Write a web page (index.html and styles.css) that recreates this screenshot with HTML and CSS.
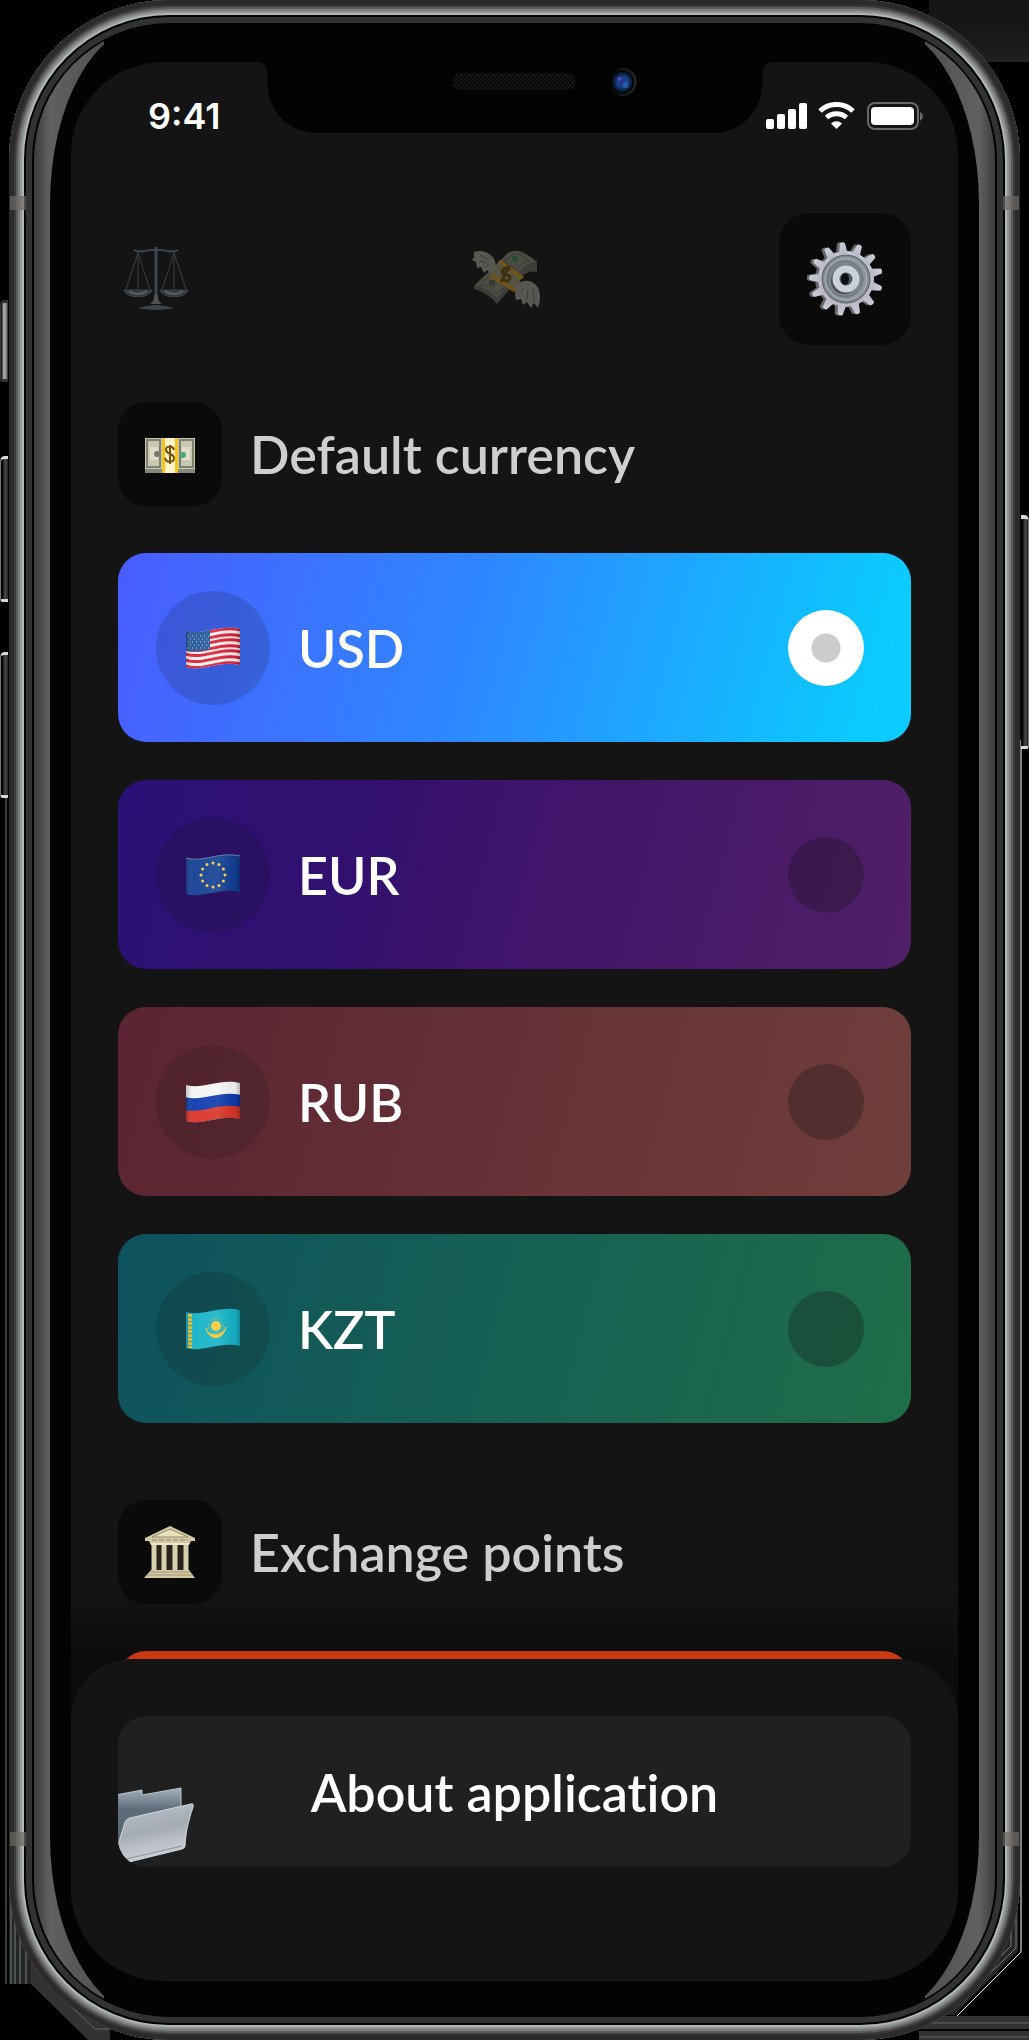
FILE: index.html
```html
<!DOCTYPE html>
<html lang="en">
<head>
<meta charset="utf-8">
<meta name="viewport" content="width=device-width, initial-scale=1">
<title>Settings</title>
<link rel="stylesheet" href="styles.css">
</head>
<body>
<div class="stage">
  <!-- corner fragments behind the device -->
  <div class="corner corner-top"></div>
  <svg class="corner corner-left" viewBox="0 0 110 1250" aria-hidden="true">
    <path d="M6 0V1194" stroke="#777" fill="none"/>
    <path d="M9 1085H31V1194H9z" fill="#252525"/>
    <path d="M11 1100v94M15 1120v74M20 1140v54M26 1160v34" stroke="#71807a" fill="none"/>
    <path d="M31 1140V1194L88 1250H110V1180z" fill="#333132"/>
    <path d="M56 1202L95 1239H110" stroke="#666" fill="none"/>
  </svg>
  <svg class="corner corner-right" viewBox="0 0 110 1300" aria-hidden="true">
    <path d="M102 0V1212L38 1276" stroke="#fff" fill="none"/>
    <path d="M99 1150V1211L35 1275H20L80 1190z" fill="#262626"/>
    <path d="M97 1150V1208L60 1244M92 1180V1206L70 1228" stroke="#737a78" fill="none"/>
    <path d="M0 1276H110V1300H0z" fill="#333132"/>
    <path d="M0 1283H110M0 1297H110" stroke="#666" fill="none"/>
    <path d="M0 1290H110" stroke="#000" stroke-width="2" fill="none"/>
  </svg>
  <span class="side-key key-mute"></span>
  <span class="side-key key-up"></span>
  <span class="side-key key-down"></span>
  <span class="side-key key-power"></span>

  <div class="phone">
    <span class="band band-tl"></span><span class="band band-tr"></span>
    <span class="band band-bl"></span><span class="band band-br"></span>
    <div class="face">
      <div class="bezel">
        <div class="screen">
          <svg class="notch" viewBox="0 0 519 71" aria-hidden="true">
            <defs>
              <pattern id="mesh" width="4" height="4" patternUnits="userSpaceOnUse"><path d="M0 0h2v2H0zM2 2h2v2H2z" fill="#1a1a1a"/></pattern>
              <radialGradient id="lens"><stop offset="0" stop-color="#2a2a8c"/><stop offset=".5" stop-color="#164385"/><stop offset="1" stop-color="#06142e"/></radialGradient>
              <linearGradient id="rim"><stop offset="0" stop-color="#030303"/><stop offset="1" stop-color="#2a2a2a"/></linearGradient>
            </defs>
            <path d="M0 0C8 0 12 4 12 12V20C12 50 34 71 62 71H457C485 71 507 50 507 20V12C507 4 511 0 519 0z" fill="#020202"/>
            <rect x="197" y="11" width="123" height="17" rx="8" fill="url(#mesh)"/>
            <circle cx="367" cy="20" r="13" fill="#080808" stroke="url(#rim)" stroke-width="2"/>
            <circle cx="367" cy="20" r="10" fill="url(#lens)"/>
            <circle cx="364" cy="17" r="2" fill="#5a48b5"/><circle cx="370" cy="23" r="3" fill="#225fa0"/>
          </svg>

          <header class="status">
            <span class="time">9:41</span>
            <svg class="signals" viewBox="0 0 158 28" aria-hidden="true">
              <g fill="#fff"><rect x="0" y="17" width="8" height="10" rx="2"/><rect x="11" y="12" width="8" height="15" rx="2"/><rect x="22" y="7" width="8" height="20" rx="2"/><rect x="33" y="1" width="8" height="26" rx="2"/>
              <path d="M70.500 27l-5.500-5.500a8 8 0 0 1 11 0z"/></g>
              <g fill="none" stroke="#fff" stroke-width="5"><path d="M54 9a24 24 0 0 1 33 0"/><path d="M60.500 15.500a15 15 0 0 1 20 0"/></g>
              <rect x="102" y="1" width="50" height="26" rx="7" fill="none" stroke="#69696b" stroke-width="2"/>
              <rect x="105" y="5" width="43" height="18" rx="4" fill="#fff"/>
              <path d="M154 10a5 5 0 0 1 0 9z" fill="#69696b"/>
            </svg>
          </header>

          <nav class="tabs" aria-label="Sections">
            <button class="tab" type="button" aria-label="Rates">
              <svg class="tab-icon" viewBox="0 0 76 76" aria-hidden="true">
                <g opacity=".75" fill="none" stroke="#4a5866">
                  <path d="M16 9c7 4 10-1 22 0c12-1 15 4 22 0" stroke-width="2"/>
                  <path d="M20 12L8 48M20 12L32 48M56 12L44 48M56 12L68 48M20 11V48M56 11V48" stroke="#4c4c4c"/>
                  <path d="M38 6V62" stroke-width="3"/>
                  <path d="M6 49h28c-2 9-26 9-28 0zM42 49h28c-2 9-26 9-28 0z" fill="#3b4652" stroke-width="1"/>
                  <path d="M11 50c5 4 13 4 18 0M47 50c5 4 13 4 18 0" stroke="#767472" stroke-width="2"/>
                  <path d="M36 54c0 5-1 7-4 9h12c-3-2-4-4-4-9z" fill="#66686b" stroke="none"/>
                  <path d="M22 67q16-5 32 0q-16 3-32 0z" fill="#4d555d" stroke-width="1"/>
                </g>
              </svg>
            </button>
            <button class="tab" type="button" aria-label="Exchange">
              <svg class="tab-icon" viewBox="0 0 76 76" aria-hidden="true">
                <path d="M3 46L38 12Q48 5 66 21V31Q55 28 43 43L26 63Q16 51 3 48z" fill="#3c3d38"/>
                <path d="M3 45L37 12Q47 6 66 21Q55 20 43 37L26 57Q16 45 3 45z" fill="#4c4d45"/>
                <path d="M8 44L21 33L36 45L26 52Q18 43 8 44zM33 20L42 13Q48 11 58 20Q52 21 45 28z" fill="none" stroke="#3a3b35"/>
                <circle cx="21" cy="42" r="3" fill="#333b32"/><circle cx="44" cy="18" r="3" fill="#254b38"/>
                <path d="M28 20L51 36L44 50L19 34z" fill="#57543f"/>
                <path d="M28 20L52 37M19 34L44 50" stroke="#755410" stroke-width="3"/>
                <path d="M39 29c-4-4-9-1-7 3c2 4 6 0 7 4c1 5-6 5-8 1M38 25L30 41" fill="none" stroke="#40300f" stroke-width="3"/>
                <path d="M3 11c8-3 22 1 22 15l-5 7l-4-4l-3 3l-3-6l-4 1l-1-6l-4-2l2-3z" fill="#595751"/>
                <path d="M44 50c0-12 19-15 24-1c2 6 1 12-1 18l-4-5l-3 5l-4-6l-4 3l-2-6l-5 1l-1-5z" fill="#595751"/>
                <path d="M9 14l9 5M8 20l8 2M13 27l5-4M50 53l2-6M56 58l1-10M63 60l-1-12" stroke="#3c3a37"/>
              </svg>
            </button>
            <button class="tab tab-active" type="button" aria-label="Settings" aria-current="page">
              <svg class="tab-icon" viewBox="0 0 76 76" aria-hidden="true">
                <defs>
                  <linearGradient id="steel" x2="0" y2="1"><stop offset="0" stop-color="#c3d0da"/><stop offset="1" stop-color="#bdb7c2"/></linearGradient>
                  <path id="tooth" d="M34 13L36 2Q38 0 41 2L43 13z"/>
                  <g id="cog"><circle cx="39" cy="38" r="28"/>
                    <use href="#tooth" transform="rotate(-5 39 38)"/><use href="#tooth" transform="rotate(23 39 38)"/><use href="#tooth" transform="rotate(51 39 38)"/><use href="#tooth" transform="rotate(78 39 38)"/><use href="#tooth" transform="rotate(106 39 38)"/><use href="#tooth" transform="rotate(134 39 38)"/><use href="#tooth" transform="rotate(162 39 38)"/><use href="#tooth" transform="rotate(190 39 38)"/><use href="#tooth" transform="rotate(217 39 38)"/><use href="#tooth" transform="rotate(245 39 38)"/><use href="#tooth" transform="rotate(273 39 38)"/><use href="#tooth" transform="rotate(301 39 38)"/><use href="#tooth" transform="rotate(328 39 38)"/>
                  </g>
                </defs>
                <use href="#cog" fill="#66676a" transform="translate(-3 0)"/>
                <use href="#cog" fill="url(#steel)"/>
                <circle cx="39" cy="38" r="24" fill="#7f868c" stroke="#59616a" stroke-width="1"/>
                <circle cx="39" cy="38" r="21" fill="#8f979d" stroke="#aeb4ba" stroke-width="1"/>
                <circle cx="38" cy="38" r="18" fill="#7b8289" stroke="#6a7178"/>
                <circle cx="37" cy="40" r="13" fill="#4d4b50"/>
                <circle cx="39" cy="38" r="10" fill="#52585c" stroke="#ccd2db" stroke-width="7"/>
                <ellipse cx="38" cy="38" rx="4" ry="6" fill="#101113"/>
              </svg>
            </button>
          </nav>

          <main class="content">
            <section class="section" aria-labelledby="currency-title">
              <div class="heading">
                <span class="tile">
                  <svg class="tile-icon" viewBox="0 0 52 52" aria-hidden="true">
                    <path d="M1 40h50v5H1z" fill="#85897b"/><path d="M1 10h50v31H1z" fill="#c9c8b1"/>
                    <path d="M3 12h13v27H3zM36 12h13v27H36z" fill="none" stroke="#80806f" stroke-width="2"/>
                    <path d="M6 19h8v13H6zM38 19h8v13h-8z" fill="#deddc8"/>
                    <circle cx="13" cy="26" r="3" fill="#77796b"/><circle cx="39" cy="27" r="3" fill="#4fa778"/>
                    <path d="M18 10h16v35H18z" fill="#f6c51d"/><path d="M21 10h10v35H21z" fill="#fff3cc"/>
                    <path d="M30 22c-1-5-9-4-8 0c1 5 8 3 8 8c0 5-8 5-9 0M26 17v19" fill="none" stroke="#79550b" stroke-width="2"/>
                  </svg>
                </span>
                <h2 class="title" id="currency-title">Default currency</h2>
              </div>
              <div class="list" role="radiogroup" aria-labelledby="currency-title">
                <label class="card card-usd">
                  <span class="flag-ring">
                    <svg class="flag" viewBox="0 0 56 42" aria-hidden="true">
                      <defs><clipPath id="wave"><path d="M1 4C18 9 34-3 55 2V38C34 33 18 45 1 40z"/></clipPath>
                      <linearGradient id="shade"><stop offset="0" stop-color="#000" stop-opacity=".28"/><stop offset=".15" stop-color="#fff" stop-opacity=".05"/><stop offset=".6" stop-color="#fff" stop-opacity=".1"/><stop offset=".9" stop-color="#000" stop-opacity=".05"/><stop offset="1" stop-color="#000" stop-opacity=".3"/></linearGradient></defs>
                      <g clip-path="url(#wave)"><path d="M0 0h56v42H0z" fill="#f5f1f0"/>
                        <path d="M0 5C18 11 34-2 56 3M0 11C18 17 34 4 56 9M0 16C18 22 34 9 56 14M0 22C18 28 34 15 56 20M0 27C18 33 34 20 56 25M0 33C18 39 34 26 56 31M0 39C18 45 34 32 56 37" fill="none" stroke="#dc1f35" stroke-width="3"/>
                        <path d="M0 0H25V22C16 25 8 25 0 24z" fill="#24579a"/>
                        <path d="M3 9h21M5 12h19M3 15h21M5 18h19M3 21h21" stroke="#b9cbe0" stroke-dasharray="1 3"/>
                        <path d="M0 0h56v42H0z" fill="url(#shade)"/></g>
                    </svg>
                  </span>
                  <span class="code">USD</span>
                  <input class="radio" type="radio" name="currency" value="usd" checked>
                </label>
                <label class="card card-eur">
                  <span class="flag-ring">
                    <svg class="flag" viewBox="0 0 56 42" aria-hidden="true">
                      <g clip-path="url(#wave)"><path d="M0 0h56v42H0z" fill="#123f93"/><path d="M0 0h56v42H0z" fill="url(#shade)"/></g>
                      <circle cx="28" cy="21" r="12" fill="none" stroke="#f8d24a" stroke-width="3" stroke-linecap="round" pathLength="120" stroke-dasharray="0 10"/>
                      <path d="M1 4C18 9 34-3 55 2" fill="none" stroke="#687da4"/>
                    </svg>
                  </span>
                  <span class="code">EUR</span>
                  <input class="radio" type="radio" name="currency" value="eur">
                </label>
                <label class="card card-rub">
                  <span class="flag-ring">
                    <svg class="flag" viewBox="0 0 56 42" aria-hidden="true">
                      <g clip-path="url(#wave)"><path d="M0 0h56v42H0z" fill="#f4f4f4"/><path d="M0 16C18 21 34 9 56 14V42H0z" fill="#0d3aad"/><path d="M0 29C18 33 34 21 56 26V42H0z" fill="#d93426"/><path d="M0 0h56v42H0z" fill="url(#shade)"/></g>
                    </svg>
                  </span>
                  <span class="code">RUB</span>
                  <input class="radio" type="radio" name="currency" value="rub">
                </label>
                <label class="card card-kzt">
                  <span class="flag-ring">
                    <svg class="flag" viewBox="0 0 56 42" aria-hidden="true">
                      <g clip-path="url(#wave)"><path d="M0 0h56v42H0z" fill="#14b3c6"/><path d="M0 0h56v42H0z" fill="url(#shade)"/></g>
                      <path d="M5 6v34" stroke="#e0bc35" stroke-width="4" stroke-dasharray="3 1"/>
                      <circle cx="31" cy="18" r="5" fill="#f9d04a"/><circle cx="31" cy="18" r="7" fill="none" stroke="#d8c85b" stroke-dasharray="1 1"/>
                      <path d="M21 20c3 13 17 13 20-1c-2 8-17 12-20 1z" fill="#f4cb43" stroke="#f4cb43"/>
                    </svg>
                  </span>
                  <span class="code">KZT</span>
                  <input class="radio" type="radio" name="currency" value="kzt">
                </label>
              </div>
            </section>

            <section class="section" aria-labelledby="points-title">
              <div class="heading">
                <span class="tile">
                  <svg class="tile-icon" viewBox="0 0 52 52" aria-hidden="true">
                    <path d="M1 12L26 0L51 12V15H47L45 19H7L5 15H1z" fill="#d2c9a5"/>
                    <path d="M8 11L26 3L44 11z" fill="#e8dfbd" stroke="#978d6c"/>
                    <path d="M8 14h36" stroke="#8e8465" stroke-dasharray="5 2"/>
                    <path d="M8 19h36v26H8z" fill="#28241b"/>
                    <path d="M10 18v27M20 18v27M31 18v27M42 18v27" stroke="#d8cfad" stroke-width="5"/>
                    <path d="M7 18h38" stroke="#eee7c9" stroke-width="2"/>
                    <path d="M7 44h38l6 8H0z" fill="#d4cba6"/><path d="M6 46h40M3 49h46" stroke="#9c9373"/>
                  </svg>
                </span>
                <h2 class="title" id="points-title">Exchange points</h2>
              </div>
              <div class="list points-list"></div>
            </section>
          </main>

          <footer class="sheet">
            <button class="about" type="button">
              <svg class="folder" viewBox="0 0 76 80" aria-hidden="true">
                <defs>
                  <linearGradient id="back" x2="0" y2="1"><stop offset="0" stop-color="#a5b1bc"/><stop offset=".35" stop-color="#5d6d7b"/><stop offset="1" stop-color="#526470"/></linearGradient>
                  <linearGradient id="front" x2=".3" y2="1"><stop offset="0" stop-color="#bec4cb"/><stop offset=".55" stop-color="#a5abb2"/><stop offset=".75" stop-color="#b9bec6"/><stop offset="1" stop-color="#c9cdd5"/></linearGradient>
                </defs>
                <path d="M-2 8L24 3V8L63 1V50L0 62H-2z" fill="url(#back)" stroke="#b9c7d2"/>
                <path d="M12 31L73 17Q76 16 75 20C70 36 68 43 67 59Q67 61 64 62L11 75L-4 72C0 57 4 46 7 35Q8 32 12 31z" fill="url(#front)" stroke="#cfdae2"/>
                <path d="M8 72L64 59" stroke="#8b929b"/>
              </svg>
              About application
            </button>
          </footer>
        </div>
      </div>
    </div>
  </div>
</div>
</body>
</html>
```
FILE: styles.css
```css
* { box-sizing: border-box; }

body {
  margin: 0;
  background: #000;
  color: #fff;
  font-family: Lato, "Open Sans", sans-serif;
  font-variant-ligatures: none;
}

.stage {
  position: relative;
  overflow: hidden;
  padding: 0 9px;
}

/* Device shell */
.phone {
  position: relative;
  padding: 24px 25px;
  border-radius: 160px;
  background: #000;
  box-shadow:
    inset 0 0 0 5px #2c2a2b,
    inset 0 0 0 7px #3c3a3b,
    inset 0 0 0 9px #5c5c5c,
    inset 0 0 0 11px #7c7c7c,
    inset 0 0 0 13px #949695,
    inset 0 0 0 15px #acb8b3,
    inset 0 0 0 17px #000,
    inset 0 0 0 23px #333233;
}

.face {
  border-radius: 136px;
  overflow: hidden;
  background: linear-gradient(to right, #3c3c3c, #606060 16px, #505050 70px, #000 70px, #000 calc(100% - 70px), #505050 calc(100% - 70px), #606060 calc(100% - 16px), #3c3c3c);
}

.bezel {
  margin: 0 16px;
  padding: 38px 21px 35px;
  border-radius: 100px / 180px;
  background: #030303;
}

.screen {
  position: relative;
  overflow: hidden;
  border-radius: 92px;
  background: #141414;
}

.notch {
  position: absolute;
  top: 0;
  left: 50%;
  width: 519px;
  height: 71px;
  transform: translateX(-50%);
}

.band {
  position: absolute;
  width: 16px;
  height: 14px;
  background: rgba(110, 106, 102, .7);
}
.band-tl { top: 196px; left: 1px; }
.band-tr { top: 196px; right: 1px; }
.band-bl { bottom: 194px; left: 1px; }
.band-br { bottom: 194px; right: 1px; }

.side-key {
  position: absolute;
  left: 0;
  width: 8px;
  border: solid #d8d8d8;
  border-width: 3px 0 3px 1px;
  border-left-color: #777;
  border-radius: 5px 0 0 3px;
  background: linear-gradient(to right, #050505 20%, #4a4b50 60%, #222);
}
.key-mute {
  top: 300px;
  height: 82px;
  border-color: #333;
  background: linear-gradient(to right, #222 10%, #b5b0af 40%, #8a8685 75%, #222);
}
.key-up { top: 456px; height: 146px; }
.key-down { top: 652px; height: 146px; }
.key-power {
  top: 515px;
  right: 0;
  left: auto;
  height: 234px;
  border-width: 4px 1px 3px 0;
  border-right-color: #777;
  border-radius: 0 5px 3px 0;
}

.corner { position: absolute; }
.corner-top {
  top: 0;
  right: 0;
  width: 100px;
  height: 62px;
  background: linear-gradient(#151515 20px, #202020);
}
.corner-left { bottom: 0; left: 0; width: 110px; height: 1250px; }
.corner-right { right: 0; bottom: 0; width: 110px; height: 1300px; }

/* Status bar */
.status {
  display: flex;
  align-items: center;
  justify-content: space-between;
  height: 108px;
  padding: 0 34px 0 77px;
}
.time {
  font: 600 36px/40px Inter, sans-serif;
}
.signals { width: 158px; height: 28px; }

/* Tabs */
.tabs {
  display: grid;
  grid-template-columns: 1fr auto 1fr;
  align-items: center;
  margin: 43px 47px 0;
}
.tab {
  display: flex;
  align-items: center;
  width: 88px;
  height: 132px;
  padding: 0;
  border: 0;
  background: none;
}
.tab-active {
  justify-content: center;
  justify-self: end;
  width: 132px;
  border-radius: 30px;
  background: #0a0a0a;
}
.tab-icon { width: 76px; height: 76px; }

/* Sections */
.content {
  display: flex;
  flex-direction: column;
  gap: 77px;
  padding: 57px 47px 0;
  background: linear-gradient(to top, #0c0c0c 60px, #141414 130px);
}
.section {
  display: flex;
  flex-direction: column;
  gap: 47px;
}
.heading {
  display: flex;
  align-items: center;
  gap: 28px;
}
.tile {
  display: flex;
  align-items: center;
  justify-content: center;
  width: 104px;
  height: 104px;
  border-radius: 28px;
  background: #0a0a0a;
}
.tile-icon { width: 52px; height: 52px; }
.title {
  margin: 0;
  color: #cfcfcf;
  font-size: 52px;
  font-weight: 600;
  line-height: 60px;
}

.list {
  display: flex;
  flex-direction: column;
  gap: 38px;
}
.card {
  display: flex;
  align-items: center;
  height: 189px;
  padding: 0 47px 0 38px;
  border-radius: 28px;
}
.card-usd { background: linear-gradient(105deg, #4a5cff, #2e88ff 45%, #0accff 95%); }
.card-eur { background: linear-gradient(105deg, #2a1175, #32106f 30%, #42156a 55%, #511f66); }
.card-rub { background: linear-gradient(105deg, #5a2432, #703f3b); }
.card-kzt { background: linear-gradient(105deg, #0e525e, #1f6e49); }

.flag-ring {
  display: flex;
  align-items: center;
  justify-content: center;
  width: 114px;
  height: 114px;
  border-radius: 50%;
  background: rgba(20, 20, 20, .16);
}
.flag { width: 56px; height: 42px; }
.code {
  flex: 1;
  padding-left: 28px;
  font-size: 52px;
  font-weight: 600;
  line-height: 60px;
}
.radio {
  width: 76px;
  height: 76px;
  margin: 0;
  appearance: none;
  border-radius: 50%;
  background: rgba(20, 20, 20, .3);
}
.radio:checked {
  background: radial-gradient(circle, #ccc 14px, #fff 15px);
}

.points-list {
  height: 68px;
  border-radius: 28px 28px 0 0;
  background: #ca3814;
}

/* Bottom sheet */
.sheet {
  position: relative;
  margin-top: -60px;
  padding: 57px 47px 114px;
  border-radius: 60px 60px 0 0;
  background: #141414;
}
.about {
  position: relative;
  display: block;
  width: 100%;
  height: 151px;
  padding: 0;
  overflow: hidden;
  border: 0;
  border-radius: 28px;
  background: #202020;
  color: #fff;
  font: 600 52px/60px Lato, "Open Sans", sans-serif;
  font-variant-ligatures: none;
}
.folder {
  position: absolute;
  bottom: 0;
  left: 0;
  width: 76px;
  height: 80px;
}
```
